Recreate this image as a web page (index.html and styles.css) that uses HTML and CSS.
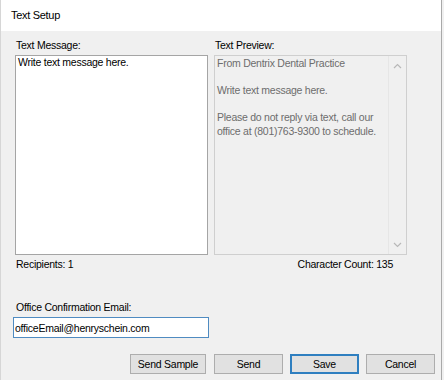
FILE: index.html
```html
<!DOCTYPE html>
<html lang="en">
<head>
    <meta charset="UTF-8">
    <title>Text Setup</title>
    <link rel="stylesheet" href="styles.css">
</head>
<body>
<div class="window">
    <div class="titlebar">Text Setup</div>
    <div class="content">
        <div class="columns">
            <div class="col">
                <p class="label">Text Message:</p>
                <div class="msgbox">Write text message here.</div>
                <p class="label">Recipients: 1</p>
            </div>
            <div class="col">
                <p class="label">Text Preview:</p>
                <div class="preview">
                    <div class="previewtext">
                        <p>From Dentrix Dental Practice</p>
                        <p>Write text message here.</p>
                        <p>Please do not reply via text, call our<br>office at (801)763-9300 to schedule.</p>
                    </div>
                    <div class="scrollbar">
                        <svg width="9" height="6" viewBox="0 0 9 6"><path d="M1 5 L4.5 1.5 L8 5" fill="none" stroke="#b8b8b8" stroke-width="1.2"/></svg>
                        <svg width="9" height="6" viewBox="0 0 9 6"><path d="M1 1 L4.5 4.5 L8 1" fill="none" stroke="#b8b8b8" stroke-width="1.2"/></svg>
                    </div>
                </div>
                <p class="label count">Character Count: 135</p>
            </div>
        </div>

        <div class="emailrow">
            <p class="label">Office Confirmation Email:</p>
            <input type="text" class="email" value="officeEmail@henryschein.com">
        </div>

        <div class="buttons">
            <button class="btn wide">Send Sample</button>
            <button class="btn">Send</button>
            <button class="btn default">Save</button>
            <button class="btn">Cancel</button>
        </div>
    </div>
</div>
</body>
</html>
```

FILE: styles.css
```css
*{
    box-sizing: border-box;
    font-family: 'Liberation Sans', Arial, sans-serif;
}
body{
    margin: 0;
    background-color: #f0f0f0;
}
p{
    margin: 0;
}
.window{
    width: 442px;
    height: 380px;
    background-color: #f0f0f0;
    border-right: 1px solid #a9a9a9;
    border-left: 1px solid #d6d6d6;
}
.titlebar{
    height: 31px;
    background-color: white;
    padding-left: 10px;
    line-height: 31px;
    font-size: 11px;
    letter-spacing: -0.3px;
    color: #000;
}
.content{
    padding: 8px 0 0 14px;
    font-size: 10.5px;
    letter-spacing: -0.25px;
    color: #000;
}
.label{
    line-height: 13px;
    padding-left: 1px;
}
.columns{
    display: flex;
    gap: 6px;
}
.col{
    width: 193px;
}
.msgbox{
    margin: 3px 0 3px 0;
    height: 200px;
    background-color: white;
    border: 1px solid #a5a5a5;
    padding: 0 2px;
    line-height: 13.5px;
}
.preview{
    margin: 3px 0 3px 0;
    height: 200px;
    border: 1px solid #cfcfcf;
    display: flex;
}
.previewtext{
    flex: 1;
    padding: 1px 2px;
    color: #6d6d6d;
    line-height: 13.5px;
}
.previewtext p{
    margin-bottom: 13.5px;
}
.scrollbar{
    width: 18px;
    border-left: 1px solid #e6e6e6;
    display: flex;
    flex-direction: column;
    justify-content: space-between;
    align-items: center;
    padding: 7px 0 6px 0;
}
.count{
    text-align: right;
    padding-right: 14px;
}
.emailrow{
    margin-top: 30px;
}
.email{
    display: block;
    margin: 3px 0 0 -2px;
    width: 196px;
    height: 21px;
    border: 1px solid #4f8bc1;
    background-color: white;
    padding: 0 1px;
    font-size: 10.5px;
    letter-spacing: -0.25px;
    color: #000;
    outline: none;
}
.buttons{
    display: flex;
    justify-content: flex-end;
    gap: 7px;
    margin-top: 16px;
    padding-right: 6px;
}
.btn{
    width: 69px;
    height: 20px;
    background-color: #e1e1e1;
    border: 1px solid #adadad;
    font-size: 10.5px;
    letter-spacing: -0.25px;
    color: #000;
    padding: 0;
}
.wide{
    width: 76px;
    margin-right: 1px;
}
.default{
    border: 2px solid #2f7fc0;
}
```
